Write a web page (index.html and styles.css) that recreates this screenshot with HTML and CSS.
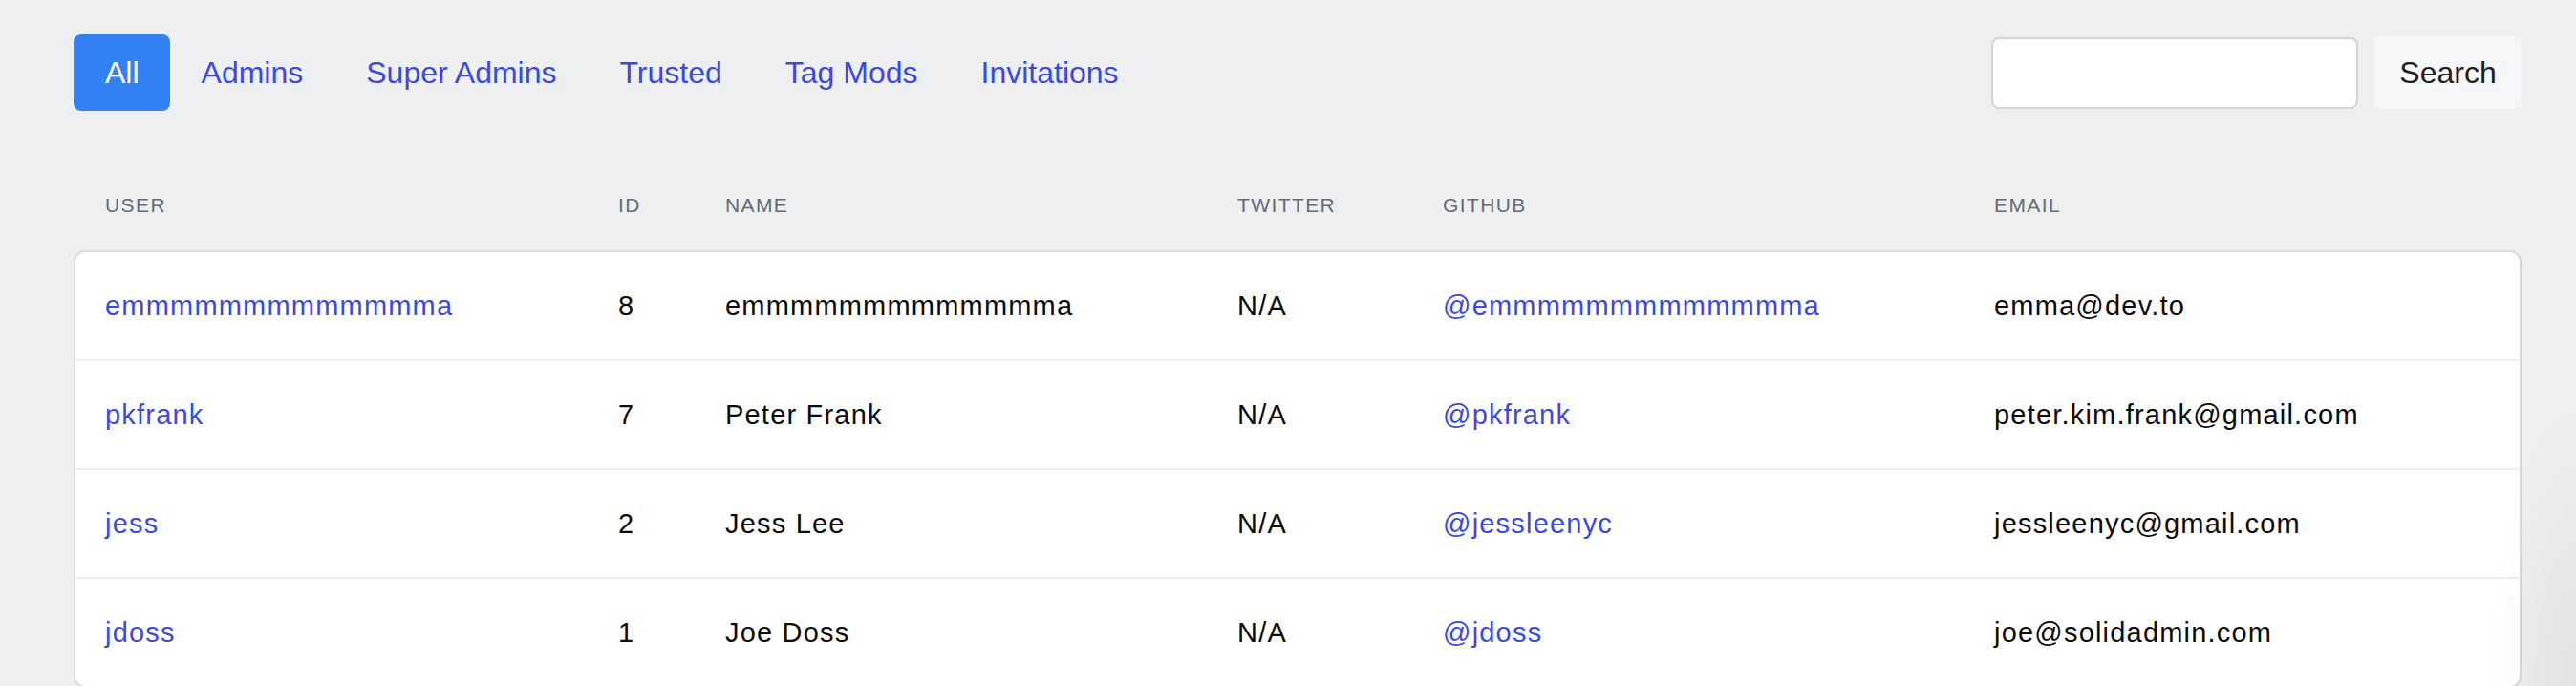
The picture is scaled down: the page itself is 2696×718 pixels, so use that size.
FILE: index.html
```html
<!DOCTYPE html>
<html lang="en">
<head>
<meta charset="utf-8">
<title>Users</title>
<link rel="stylesheet" href="styles.css">
</head>
<body>
<div class="page">
  <div class="toolbar">
    <nav class="tabs">
      <a class="tab tab-active" href="#">All</a>
      <a class="tab" href="#">Admins</a>
      <a class="tab" href="#">Super Admins</a>
      <a class="tab" href="#">Trusted</a>
      <a class="tab" href="#">Tag Mods</a>
      <a class="tab" href="#">Invitations</a>
    </nav>
    <form class="search">
      <input class="search-input" type="text" aria-label="Search">
      <button class="search-btn" type="button">Search</button>
    </form>
  </div>

  <div class="cols head">
    <span>USER</span>
    <span>ID</span>
    <span>NAME</span>
    <span>TWITTER</span>
    <span>GITHUB</span>
    <span>EMAIL</span>
  </div>

  <div class="card">
    <div class="cols row">
      <a class="link" href="#">emmmmmmmmmmmmma</a>
      <span>8</span>
      <span>emmmmmmmmmmmmma</span>
      <span>N/A</span>
      <a class="link" href="#">@emmmmmmmmmmmmma</a>
      <span>emma@dev.to</span>
    </div>
    <div class="cols row">
      <a class="link" href="#">pkfrank</a>
      <span>7</span>
      <span>Peter Frank</span>
      <span>N/A</span>
      <a class="link" href="#">@pkfrank</a>
      <span>peter.kim.frank@gmail.com</span>
    </div>
    <div class="cols row">
      <a class="link" href="#">jess</a>
      <span>2</span>
      <span>Jess Lee</span>
      <span>N/A</span>
      <a class="link" href="#">@jessleenyc</a>
      <span>jessleenyc@gmail.com</span>
    </div>
    <div class="cols row">
      <a class="link" href="#">jdoss</a>
      <span>1</span>
      <span>Joe Doss</span>
      <span>N/A</span>
      <a class="link" href="#">@jdoss</a>
      <span>joe@solidadmin.com</span>
    </div>
  </div>
</div>
<div class="edge-shade"></div>
</body>
</html>
```

FILE: styles.css
```css
* { box-sizing: border-box; }

html, body {
  margin: 0;
  height: 718px;
  overflow: hidden;
}

body {
  background: #eeeff1;
  font-family: "Liberation Sans", Arial, sans-serif;
  color: #0a0a0a;
  position: relative;
}

.page {
  padding: 36px 57px 0 77px;
}

.toolbar {
  display: flex;
  align-items: center;
  justify-content: space-between;
  height: 80px;
}

.tabs {
  display: flex;
  align-items: center;
  height: 80px;
}

.tab {
  display: flex;
  align-items: center;
  height: 80px;
  padding: 0 33px;
  font-size: 32px;
  color: #3b49df;
  text-decoration: none;
  border-radius: 8px;
}

.tab-active {
  background: #3481f6;
  color: #ffffff;
  padding: 0 32px 0 33px;
}

.search {
  display: flex;
  align-items: center;
  gap: 17px;
  margin: 0;
}

.search-input {
  width: 384px;
  height: 75px;
  border: 2px solid #d2d6db;
  border-radius: 8px;
  background: #ffffff;
  font-size: 28px;
  font-family: inherit;
  padding: 0 16px;
}

.search-btn {
  width: 154px;
  height: 76px;
  border: none;
  border-radius: 8px;
  background: #f6f7f9;
  color: #1b1e23;
  font-size: 32px;
  font-family: inherit;
  padding: 0;
}

.cols {
  display: grid;
  grid-template-columns: 537px 112px 536px 215px 577px 1fr;
  align-items: center;
  padding: 0 31px;
}

.head {
  border-left: 2px solid transparent;
  border-right: 2px solid transparent;
  padding-top: 87px;
  padding-bottom: 35px;
  font-size: 21px;
  line-height: 24px;
  letter-spacing: 1.4px;
  color: #646b75;
}

.card {
  background: #ffffff;
  border: 2px solid #d8dadd;
  border-radius: 12px;
  overflow: hidden;
}

.row {
  height: 114px;
  border-bottom: 2px solid #eeeff1;
  font-size: 29px;
  letter-spacing: 1.2px;
  white-space: nowrap;
}

.row:last-child {
  border-bottom: none;
  height: 112px;
}

.link {
  color: #3b49df;
  text-decoration: none;
}

.edge-shade {
  position: absolute;
  right: 0;
  bottom: 0;
  width: 90px;
  height: 300px;
  pointer-events: none;
  background: radial-gradient(ellipse at 100% 100%, rgba(0, 0, 0, 0.055), rgba(0, 0, 0, 0) 70%);
}
```
